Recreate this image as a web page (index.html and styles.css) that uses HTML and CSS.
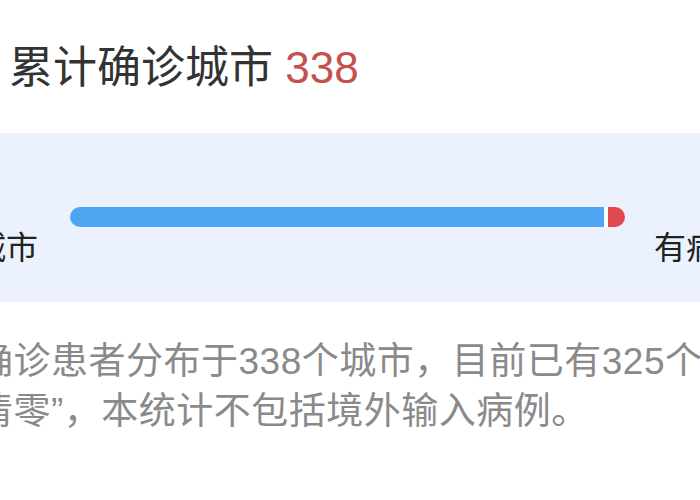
FILE: index.html
```html
<!DOCTYPE html>
<html lang="zh-CN">
<head>
  <meta charset="UTF-8" />
  <meta name="viewport" content="width=device-width, initial-scale=1.0"/>
  <title>累计确诊城市</title>
  <link rel="stylesheet" href="styles.css">
</head>
<body>
  <h2 class="title">累计确诊城市 <span class="count">338</span></h2>

  <div class="band">
    <div class="label label-left">城市</div>
    <div class="bar">
      <div class="bar-cleared" style="width: 96.2%"></div>
      <div class="bar-active"></div>
    </div>
    <div class="label label-right">有病例</div>
  </div>

  <p class="note">确诊患者分布于338个城市，目前已有325个<br>清零”，本统计不包括境外输入病例。</p>
</body>
</html>
```

FILE: styles.css
```css
body {
  margin: 0;
  font-family: "Liberation Sans", "Noto Sans CJK SC", sans-serif;
  background: #fff;
  overflow: hidden;
}

.title {
  margin: 40px 0 0 9px;
  font-size: 44px;
  line-height: 56px;
  font-weight: normal;
  color: #333;
  white-space: nowrap;
}

.count {
  color: #c4514f;
}

/* Light blue strip holding the progress bar */
.band {
  margin-top: 37px;
  height: 169px;
  background: #ebf2fd;
  display: grid;
  grid-template-columns: 70px 555px 1fr;
  align-items: start;
}

.label {
  margin-top: 95px;
  font-size: 32px;
  line-height: 40px;
  color: #222;
  white-space: nowrap;
}

.label-left {
  justify-self: end;
  margin-right: 32px;
}

.label-right {
  margin-left: 29px;
}

.bar {
  margin-top: 74px;
  height: 20px;
  display: flex;
  border-radius: 10px;
  overflow: hidden;
}

.bar-cleared {
  background: #4ea6f2;
  border-right: 4px solid #fff;
}

.bar-active {
  flex: 1;
  background: #e0484e;
}

.note {
  margin: 35px 0 0 -24px;
  font-size: 37px;
  line-height: 50px;
  letter-spacing: 0.5px;
  color: #8a8a8a;
  white-space: nowrap;
}
```
